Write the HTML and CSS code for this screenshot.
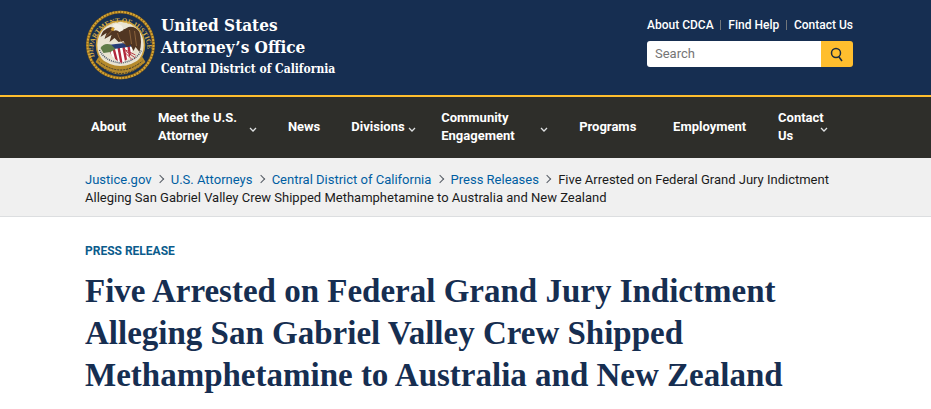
FILE: index.html
```html
<!DOCTYPE html>
<html lang="en">
<head>
  <meta charset="UTF-8">
  <meta name="viewport" content="width=device-width, initial-scale=1.0">
  <title>Central District of California | Press Release</title>
  <link rel="stylesheet" href="styles.css">
</head>
<body>

<header class="header">
  <div class="container header-inner">
    <a class="brand" href="#">
      <svg class="seal" viewBox="0 0 70 70" aria-hidden="true">
        <defs>
          <path id="ring-top" d="M 9 47 A 27 27 0 1 1 61 47"/>
          <clipPath id="shield"><path d="M22 35 L47 32 Q49 47 36 53 Q24 48 22 35Z"/></clipPath>
        </defs>
        <circle cx="35" cy="35" r="34.5" fill="#8a641c"/>
        <circle cx="35" cy="35" r="33" fill="none" stroke="#d6a634" stroke-width="2" stroke-dasharray="2 1"/>
        <circle cx="35" cy="35" r="31.5" fill="#172f50"/>
        <circle cx="35" cy="35" r="24" fill="#e9e4d2" stroke="#c79a34" stroke-width="1.5"/>
        <text class="seal-text"><textPath href="#ring-top">DEPARTMENT OF JUSTICE</textPath></text>
        <path d="M13 47 Q35 65 57 47 L60 52 Q35 77 10 52Z" fill="#b58a2c"/>
        <path d="M13 51 Q35 69 57 51 M12 54 Q35 73 58 54" fill="none" stroke="#3e3a2c" stroke-width="1" stroke-dasharray="2 1"/>
        <path d="M14 40 Q19 51 35 53 Q51 51 56 40" fill="none" stroke="#44526a" stroke-width="1.5" stroke-dasharray="1 1"/>
        <g clip-path="url(#shield)">
          <rect x="20" y="30" width="30" height="24" fill="#fff"/>
          <path d="M23 39 L27 54 M28 38 L32 54 M33 37 L36 54 M38 37 L41 53 M43 36 L45 50" stroke="#b3283c" stroke-width="2.4"/>
          <path d="M20 31 H50 V36 L21 40Z" fill="#263d76"/>
        </g>
        <path d="M15 38 Q19 32 26 35 L30 39 L25 42 L18 43Z" fill="#5f7c48"/>
        <path d="M38 39 L50 45 M40 41 L50 48 M40 43 L47 50" stroke="#b7404b" stroke-width="1"/>
        <path d="M15 27 Q17 19 25 17 L31 19 Q38 21 43 17 Q50 16 54 22 Q57 32 54 42 L50 37 L48 41 L45 35 L41 37 L38 31 L33 32 L29 28 L24 32 L26 25 L19 29 L21 23Z" fill="#513622"/>
        <path d="M32 23 Q34 32 40 34 M44 20 L46 34 M49 21 L51 36 M27 20 L20 27" fill="none" stroke="#89613b" stroke-width="1"/>
        <path d="M27 17 Q28 13 32 14 Q37 14 38 20 L34 22 Q31 19 28 21 L29 18Z" fill="#f4f0e4"/>
        <path d="M27 17 L29 18 L28 21 L25 20Z" fill="#d9a22c"/>
      </svg>
      <span class="brand-text">
        <span class="brand-name">United States<br>Attorney’s Office</span>
        <span class="brand-district">Central District of California</span>
      </span>
    </a>

    <div class="header-side">
      <ul class="top-links">
        <li><a href="#">About CDCA</a></li>
        <li><a href="#">Find Help</a></li>
        <li><a href="#">Contact Us</a></li>
      </ul>
      <form class="search">
        <input class="search-input" type="search" placeholder="Search" aria-label="Search">
        <button class="search-button" type="submit" aria-label="Submit search">
          <svg width="14" height="15" viewBox="0 0 14 15"><circle cx="6" cy="6" r="4.5"/><path d="M9 10 L12 14"/></svg>
        </button>
      </form>
    </div>
  </div>
</header>

<nav class="nav" aria-label="Main">
  <div class="container">
    <ul class="nav-list">
      <li><a class="nav-item" href="#">About</a></li>
      <li><button class="nav-item" type="button">Meet the U.S. Attorney<svg class="chevron" viewBox="0 0 8 6"><path d="M1 1 L4 4 L7 1"/></svg></button></li>
      <li><a class="nav-item" href="#">News</a></li>
      <li class="tight"><button class="nav-item" type="button">Divisions<svg class="chevron" viewBox="0 0 8 6"><path d="M1 1 L4 4 L7 1"/></svg></button></li>
      <li><button class="nav-item" type="button">Community Engagement<svg class="chevron" viewBox="0 0 8 6"><path d="M1 1 L4 4 L7 1"/></svg></button></li>
      <li><a class="nav-item" href="#">Programs</a></li>
      <li><a class="nav-item" href="#">Employment</a></li>
      <li class="tight"><button class="nav-item" type="button">Contact Us<svg class="chevron" viewBox="0 0 8 6"><path d="M1 1 L4 4 L7 1"/></svg></button></li>
    </ul>
  </div>
</nav>

<nav class="breadcrumb" aria-label="Breadcrumbs">
  <div class="container">
    <ol class="breadcrumb-list">
      <li><a href="#">Justice.gov</a></li>
      <li><a href="#">U.S. Attorneys</a></li>
      <li><a href="#">Central District of California</a></li>
      <li><a href="#">Press Releases</a></li>
      <li>Five Arrested on Federal Grand Jury Indictment Alleging San Gabriel Valley Crew Shipped Methamphetamine to Australia and New Zealand</li>
    </ol>
  </div>
</nav>

<main class="container main">
  <p class="label">Press Release</p>
  <h1 class="title">Five Arrested on Federal Grand Jury Indictment Alleging San Gabriel Valley Crew Shipped Methamphetamine to Australia and New Zealand</h1>
</main>

</body>
</html>
```
FILE: styles.css
```css
* {
  box-sizing: border-box;
}

body {
  margin: 0;
  background-color: #fff;
  color: #1b1b1b;
  font-family: Roboto, "Liberation Sans", sans-serif;
  font-size: 13px;
  line-height: 18px;
}

ul, ol {
  list-style: none;
  margin: 0;
  padding: 0;
}

a {
  text-decoration: none;
}

.container {
  padding: 0 78px 0 85px;
}

.header {
  background-color: #162e51;
  border-bottom: 2px solid #ffbe2e;
}

.header-inner {
  display: flex;
  justify-content: space-between;
  padding-top: 10px;
  padding-bottom: 15px;
}

.brand {
  display: flex;
  gap: 5px;
  color: #fff;
  font-family: "DejaVu Serif Condensed", "DejaVu Serif", serif;
  font-weight: bold;
}

.seal {
  width: 71px;
  height: 70px;
}

.seal-text {
  fill: #d6ad48;
  font-family: "Liberation Serif", serif;
  font-size: 7px;
}

.brand-text {
  display: flex;
  flex-direction: column;
  padding-top: 4px;
}

.brand-name {
  font-size: 17px;
  line-height: 22px;
}

.brand-district {
  font-size: 12px;
  line-height: 22px;
}

.header-side {
  width: 206px;
  padding-top: 6px;
}

.top-links {
  display: flex;
  justify-content: space-between;
  font-size: 12px;
}

.top-links li {
  display: flex;
  align-items: center;
  white-space: nowrap;
}

.top-links li + li::before {
  content: "";
  height: 10px;
  margin-right: 7px;
  border-left: 1px solid #71767a;
}

.top-links a {
  color: #fff;
  font-weight: 500;
}

.search {
  display: flex;
  height: 26px;
  margin-top: 7px;
}

.search-input {
  flex: 1;
  min-width: 0;
  padding: 0 8px;
  border: none;
  border-radius: 3px 0 0 3px;
  background-color: #fff;
  font: inherit;
}

.search-input::placeholder {
  color: #757575;
}

.search-button {
  display: flex;
  align-items: center;
  justify-content: center;
  width: 32px;
  padding: 0;
  border: none;
  border-radius: 0 3px 3px 0;
  background-color: #ffbe2e;
}

.search-button svg {
  fill: none;
  stroke: #1b2b3f;
  stroke-width: 1.5;
}

.nav {
  background-color: #2e2e2a;
}

.nav-list {
  display: grid;
  grid-template-columns: 67fr 130fr 63fr 90fr 138fr 94fr 105fr 75fr;
  align-items: center;
  min-height: 61px;
  padding: 0 0 2px 6px;
}

.nav-list li {
  padding-right: 31px;
}

.nav-list .tight {
  padding-right: 25px;
}

.nav-item {
  position: relative;
  display: block;
  width: 100%;
  padding: 0;
  border: none;
  background: none;
  color: #fff;
  font: bold 13px/18px Roboto, "Liberation Sans", sans-serif;
  text-align: left;
}

.chevron {
  position: absolute;
  right: 0;
  top: 50%;
  width: 8px;
  height: 6px;
  fill: none;
  stroke: #dfe1e2;
  stroke-width: 1.3;
}

.breadcrumb {
  padding: 13px 0 9px;
  border-bottom: 1px solid #dcdee0;
  background-color: #f0f0f0;
}

.breadcrumb-list li {
  display: inline;
}

.breadcrumb-list li + li::before {
  content: "";
  display: inline-block;
  width: 5px;
  height: 5px;
  margin: 0 8px 2px 2px;
  border-top: 1px solid #565c65;
  border-right: 1px solid #565c65;
  transform: rotate(45deg);
}

.breadcrumb-list a {
  color: #005ea2;
}

.main {
  padding-top: 25px;
}

.label {
  margin: 0 0 10px;
  color: #0b5c8c;
  font-size: 12px;
  font-weight: bold;
  text-transform: uppercase;
}

.title {
  margin: 0;
  color: #162e51;
  font-family: "Liberation Serif", serif;
  font-size: 33px;
  line-height: 42px;
}
```
